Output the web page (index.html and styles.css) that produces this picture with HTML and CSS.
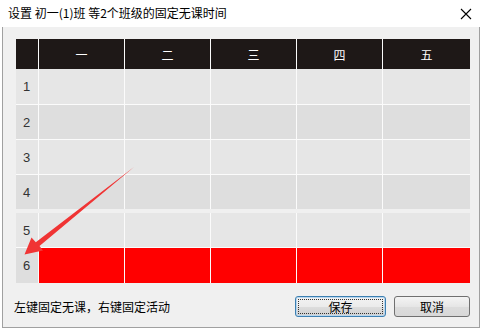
FILE: index.html
```html
<!DOCTYPE html>
<html>
<head>
    <title>设置固定无课时间</title>
    <link rel="stylesheet" href="styles.css">
</head>
<body>
    <div class="titlebar">
        <span class="title">设置 初一(1)班 等2个班级的固定无课时间</span>
        <svg class="close" width="12" height="12" viewBox="0 0 12 12">
            <path d="M1 1 L11 11 M11 1 L1 11" stroke="#000" stroke-width="1.1" fill="none"/>
        </svg>
    </div>

    <div class="dialog">
        <div class="grid">
            <div class="row head">
                <div class="cell num"></div>
                <div class="cell">一</div>
                <div class="cell">二</div>
                <div class="cell">三</div>
                <div class="cell">四</div>
                <div class="cell wide">五</div>
            </div>
            <div class="rows">
                <div class="row r1 odd">
                    <div class="cell num">1</div>
                    <div class="cell"></div><div class="cell"></div><div class="cell"></div><div class="cell"></div><div class="cell wide"></div>
                </div>
                <div class="row even">
                    <div class="cell num">2</div>
                    <div class="cell"></div><div class="cell"></div><div class="cell"></div><div class="cell"></div><div class="cell wide"></div>
                </div>
                <div class="row odd">
                    <div class="cell num">3</div>
                    <div class="cell"></div><div class="cell"></div><div class="cell"></div><div class="cell"></div><div class="cell wide"></div>
                </div>
                <div class="row even">
                    <div class="cell num">4</div>
                    <div class="cell"></div><div class="cell"></div><div class="cell"></div><div class="cell"></div><div class="cell wide"></div>
                </div>
            </div>
            <div class="band"></div>
            <div class="rows">
                <div class="row r5 odd">
                    <div class="cell num">5</div>
                    <div class="cell"></div><div class="cell"></div><div class="cell"></div><div class="cell"></div><div class="cell wide"></div>
                </div>
                <div class="row r6 fixed">
                    <div class="cell num">6</div>
                    <div class="cell"></div><div class="cell"></div><div class="cell"></div><div class="cell"></div><div class="cell wide"></div>
                </div>
            </div>
        </div>

        <div class="footer">
            <span class="hint">左键固定无课，右键固定活动</span>
            <div class="buttons">
                <button class="btn primary"><span>保存</span></button>
                <button class="btn cancel"><span>取消</span></button>
            </div>
        </div>
    </div>

    <!-- red arrow drawn over the table -->
    <svg class="arrow" width="485" height="331" viewBox="0 0 485 331">
        <polygon points="134,167 39.5,246 43,250.5 24.5,254.5 31.5,237.5 35.8,242.2" fill="#f03434"/>
    </svg>
</body>
</html>
```

FILE: styles.css
```css
body {
    margin: 0;
    padding: 0;
    width: 485px;
    height: 331px;
    background: #fff;
    font-family: "Noto Sans CJK SC", "Liberation Sans", sans-serif;
    font-size: 12px;
    color: #000;
    position: relative;
    overflow: hidden;
}

.titlebar {
    height: 27px;
    display: flex;
    align-items: center;
    justify-content: space-between;
    padding: 0 13px 0 8px;
    background: #fff;
}

.title {
    font-size: 12px;
    line-height: 14px;
    margin-top: -1px;
}

.close {
    margin-top: 1px;
}

.dialog {
    margin-left: 2px;
    width: 478px;
    height: 301px;
    border: 1px solid #a0a0a0;
    border-top: none;
    background: #f0f0f0;
    padding: 12px 0 0 13px;
    box-sizing: border-box;
}

.grid {
    width: 454px;
    display: flex;
    flex-direction: column;
}

.rows {
    display: flex;
    flex-direction: column;
    gap: 1px;
    background: #fbfbfb;
}

.row {
    display: flex;
    gap: 1px;
    height: 34px;
    background: #fbfbfb;
}

.row.r1 {
    height: 35px;
}

.row.r6 {
    height: 35px;
}

.cell {
    width: 85px;
    display: flex;
    align-items: center;
    justify-content: center;
}

.cell.num {
    width: 22px;
    justify-content: flex-start;
    padding-left: 7px;
    box-sizing: border-box;
    color: #333;
    font-family: "Liberation Sans", sans-serif;
    font-size: 13px;
}

.cell.wide {
    width: 87px;
}

.head {
    height: 30px;
}

.head .cell {
    background: #1e1817;
    color: #fff;
    font-size: 12px;
}

.odd .cell {
    background: #e6e6e6;
}

.even .cell {
    background: #dedede;
}

.fixed .cell {
    background: #ff0000;
}

.fixed .cell.num {
    background: #dedede;
}

.band {
    height: 4px;
    background: #f0f0f0;
}

.footer {
    margin-top: 13px;
    height: 21px;
    display: flex;
    align-items: center;
    justify-content: space-between;
    padding-right: 9px;
}

.hint {
    margin-left: -2px;
    font-size: 12px;
}

.buttons {
    display: flex;
    gap: 8px;
}

.btn {
    height: 21px;
    padding: 0;
    border-radius: 3px;
    background: linear-gradient(#f4f4f4, #e6e6e6 50%, #dcdcdc 51%, #d8d8d8);
    font-family: "Noto Sans CJK SC", sans-serif;
    font-size: 12px;
    color: #000;
    display: flex;
    align-items: center;
    justify-content: center;
}

.btn.primary {
    width: 91px;
    border: 1px solid #3c7fb1;
    background: linear-gradient(#f3f3f3, #ebebeb 50%, #dddddd 51%, #cfcfcf);
    box-shadow: inset 0 0 0 1px #b8d6ee;
}

.btn.primary span {
    width: 83px;
    height: 13px;
    line-height: 13px;
    border: 1px dotted #333;
}

.btn.cancel {
    width: 76px;
    border: 1px solid #707070;
}

.arrow {
    position: absolute;
    left: 0;
    top: 0;
    pointer-events: none;
}
```
